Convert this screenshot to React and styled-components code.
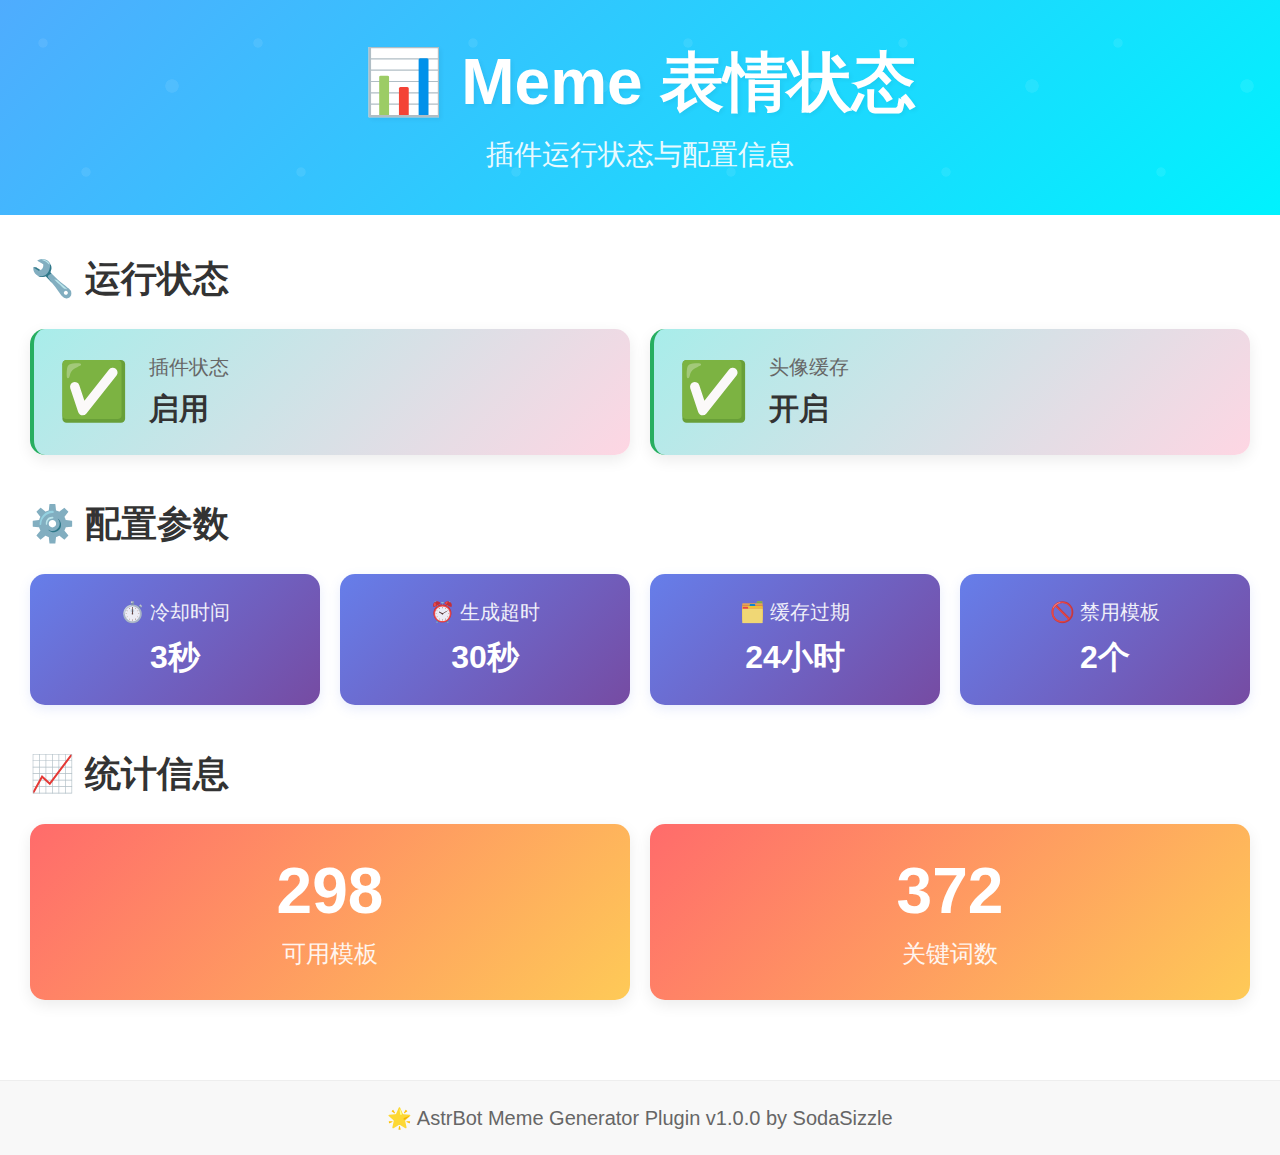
import React from 'react'
import styled, { createGlobalStyle } from 'styled-components'

const GlobalStyle = createGlobalStyle`
  * { box-sizing: border-box; margin: 0; padding: 0; }
  body {
    background: #fff;
    font-family: "Liberation Sans", Arial, sans-serif;
    line-height: 1.6;
    color: #333;
  }
`

const Page = styled.div`
  width: 1280px;
  background: #fff;
`

const Header = styled.header`
  position: relative;
  overflow: hidden;
  height: 215px;
  padding: 31px 30px 0;
  text-align: center;
  color: #fff;
  background: linear-gradient(135deg, #4facfe 0%, #00f2fe 100%);
`

const Dots = styled.div`
  position: absolute;
  inset: 0;
  background-image:
    radial-gradient(circle at 43px 43px, rgba(255, 255, 255, 0.08) 4.3px, transparent 5px),
    radial-gradient(circle at 172px 86px, rgba(255, 255, 255, 0.08) 6.4px, transparent 7px),
    radial-gradient(circle at 86px 172px, rgba(255, 255, 255, 0.08) 4.3px, transparent 5px);
  background-size: 215px 215px;
`

const Title = styled.h1`
  position: relative;
  font-size: 64px;
  font-weight: 700;
  line-height: 102px;
  text-shadow: 2px 2px 4px rgba(0, 0, 0, 0.05);
`

const Subtitle = styled.p`
  position: relative;
  font-size: 28px;
  line-height: 44px;
  opacity: 0.9;
`

const Main = styled.main`
  padding: 40px 30px;
`

const Section = styled.section`
  margin-bottom: 45px;
  &:last-child { margin-bottom: 40px; }
`

const SectionTitle = styled.h2`
  font-size: 36px;
  font-weight: 700;
  line-height: 48px;
  color: #333;
  margin-bottom: 26px;
`

const Grid = styled.div`
  display: grid;
  grid-template-columns: repeat(${p => p.$cols}, 1fr);
  gap: 20px;
`

const StatusCard = styled.div`
  display: flex;
  align-items: center;
  height: 126px;
  padding: 0 25px;
  border-left: 4px solid #27ae60;
  border-radius: 15px;
  background: linear-gradient(135deg, #a8edea 0%, #fed6e3 100%);
  box-shadow: 0 5px 15px rgba(0, 0, 0, 0.08);
`

const StatusIcon = styled.span`
  font-size: 56px;
  line-height: 1;
  margin-right: 20px;
  transform: scale(1.02);
`

const StatusLabel = styled.div`
  font-size: 20px;
  color: #666;
  margin-bottom: 2px;
`

const StatusValue = styled.div`
  font-size: 30px;
  font-weight: 700;
  color: #333;
  line-height: 48px;
`

const ConfigCard = styled.div`
  height: 131px;
  padding: 20px;
  text-align: center;
  color: #fff;
  border-radius: 15px;
  background: linear-gradient(135deg, #667eea 0%, #764ba2 100%);
  box-shadow: 0 4px 12px rgba(102, 126, 234, 0.15);
`

const ConfigLabel = styled.div`
  font-size: 20px;
  line-height: 36px;
  opacity: 0.9;
  margin-bottom: 2px;
`

const ConfigValue = styled.div`
  font-size: 32px;
  font-weight: 700;
  line-height: 51px;
`

const StatCard = styled.div`
  height: 176px;
  padding: 31px 30px 0;
  text-align: center;
  color: #fff;
  border-radius: 15px;
  background: linear-gradient(135deg, #ff6b6b 0%, #feca57 100%);
  box-shadow: 0 5px 15px rgba(0, 0, 0, 0.08);
`

const StatNumber = styled.div`
  font-size: 64px;
  font-weight: 700;
  line-height: 72px;
`

const StatLabel = styled.div`
  font-size: 24px;
  line-height: 38px;
  opacity: 0.9;
  margin-top: 8px;
`

const Footer = styled.footer`
  height: 75px;
  padding-top: 21px;
  text-align: center;
  font-size: 20px;
  line-height: 32px;
  color: #666;
  background: #f8f8f8;
  border-top: 1px solid #eee;
`

const statuses = [
  { label: '插件状态', value: '启用' },
  { label: '头像缓存', value: '开启' },
]

const configs = [
  { label: '⏱️ 冷却时间', value: '3秒' },
  { label: '⏰ 生成超时', value: '30秒' },
  { label: '🗂️ 缓存过期', value: '24小时' },
  { label: '🚫 禁用模板', value: '2个' },
]

const stats = [
  { value: '298', label: '可用模板' },
  { value: '372', label: '关键词数' },
]

export default function App() {
  return (
    <Page>
      <GlobalStyle />
      <Header>
        <Dots />
        <Title>📊 Meme 表情状态</Title>
        <Subtitle>插件运行状态与配置信息</Subtitle>
      </Header>
      <Main>
        <Section>
          <SectionTitle>🔧 运行状态</SectionTitle>
          <Grid $cols={2}>
            {statuses.map(s => (
              <StatusCard key={s.label}>
                <StatusIcon>✅</StatusIcon>
                <div>
                  <StatusLabel>{s.label}</StatusLabel>
                  <StatusValue>{s.value}</StatusValue>
                </div>
              </StatusCard>
            ))}
          </Grid>
        </Section>
        <Section>
          <SectionTitle>⚙️ 配置参数</SectionTitle>
          <Grid $cols={4}>
            {configs.map(c => (
              <ConfigCard key={c.label}>
                <ConfigLabel>{c.label}</ConfigLabel>
                <ConfigValue>{c.value}</ConfigValue>
              </ConfigCard>
            ))}
          </Grid>
        </Section>
        <Section>
          <SectionTitle>📈 统计信息</SectionTitle>
          <Grid $cols={2}>
            {stats.map(s => (
              <StatCard key={s.label}>
                <StatNumber>{s.value}</StatNumber>
                <StatLabel>{s.label}</StatLabel>
              </StatCard>
            ))}
          </Grid>
        </Section>
      </Main>
      <Footer>🌟 AstrBot Meme Generator Plugin v1.0.0 by SodaSizzle</Footer>
    </Page>
  )
}
